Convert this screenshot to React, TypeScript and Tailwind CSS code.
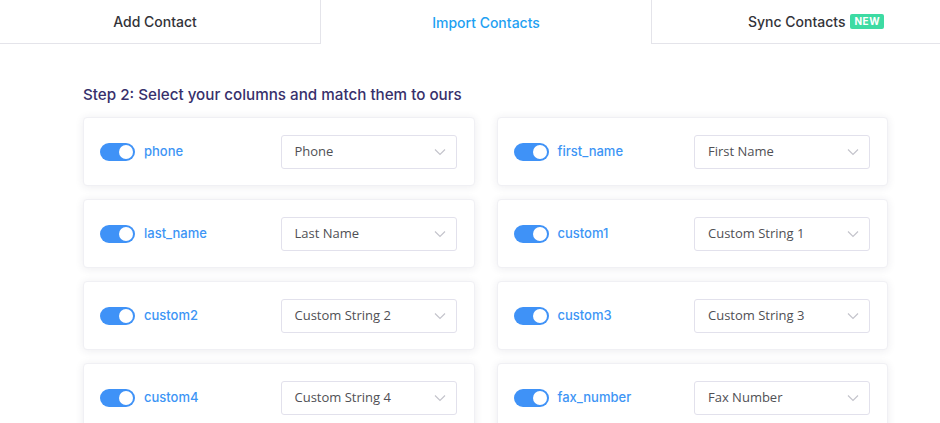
import React, { useState } from 'react';

const rows: [string, string][] = [
    ['phone', 'Phone'],
    ['first_name', 'First Name'],
    ['last_name', 'Last Name'],
    ['custom1', 'Custom String 1'],
    ['custom2', 'Custom String 2'],
    ['custom3', 'Custom String 3'],
    ['custom4', 'Custom String 4'],
    ['fax_number', 'Fax Number'],
];

const Chevron = () => (
    <svg width="12" height="8" viewBox="0 0 12 8" fill="none" stroke="#c4c4cc" strokeWidth="1.2">
        <path d="M1 1.5l5 5 5-5" />
    </svg>
);

const MappingCard = ({ field, target }: { field: string; target: string }) => {
    const [on, setOn] = useState(true);

    return (
        <div className="h-[69px] bg-white rounded-[4px] shadow-[0_1px_8px_rgba(40,40,80,0.09)] border border-[#f0f0f4] flex items-center pl-[16px] pr-[17px]">
            <button
                onClick={() => setOn(!on)}
                className={`w-[35px] h-[18px] rounded-full flex items-center px-[2px] ${on ? 'bg-[#3f92f7] justify-end' : 'bg-gray-300 justify-start'}`}
            >
                <span className="w-[14px] h-[14px] rounded-full bg-white block" />
            </button>
            <span className="ml-[9px] text-[13px] font-medium text-[#3d95f5] font-['Inter',sans-serif] flex-1">
                {field}
            </span>
            <div className="w-[176px] h-[34px] border border-[#e2e1ec] rounded-[3px] flex items-center justify-between pl-[13px] pr-[10px] bg-white">
                <span className="text-[13px] text-[#505055] font-['Open_Sans',sans-serif]">{target}</span>
                <Chevron />
            </div>
        </div>
    );
};

const App: React.FC = () => {
    return (
        <div className="w-[940px] h-[423px] overflow-hidden bg-white font-['Inter',sans-serif]">
            {/* Tabs */}
            <div className="flex h-[44px]">
                <div className="w-[321px] border-r border-b border-[#e4e4ea] flex items-center justify-center pr-[10px] text-[14px] font-medium text-[#333338]">
                    Add Contact
                </div>
                <div className="w-[330px] flex items-center justify-center text-[14px] font-medium text-[#1ea1f2]">
                    Import Contacts
                </div>
                <div className="flex-1 border-l border-b border-[#e4e4ea] flex items-center justify-center gap-[5px] pl-[40px] text-[14px] font-medium text-[#333338]">
                    Sync Contacts
                    <span className="bg-[#3ddba3] text-white text-[10px] font-bold tracking-[0.5px] px-[4px] h-[15px] leading-[15px] rounded-[2px]">
                        NEW
                    </span>
                </div>
            </div>

            <div className="pl-[83px] w-[888px]">
                <h2 className="mt-[40px] text-[15.2px] font-medium text-[#37306b] leading-[22px]">
                    Step 2: Select your columns and match them to ours
                </h2>
                <div className="mt-[11px] grid grid-cols-2 gap-x-[22px] gap-y-[13px]">
                    {rows.map(([f, t]) => (
                        <MappingCard key={f} field={f} target={t} />
                    ))}
                </div>
            </div>
        </div>
    );
};

export default App;
